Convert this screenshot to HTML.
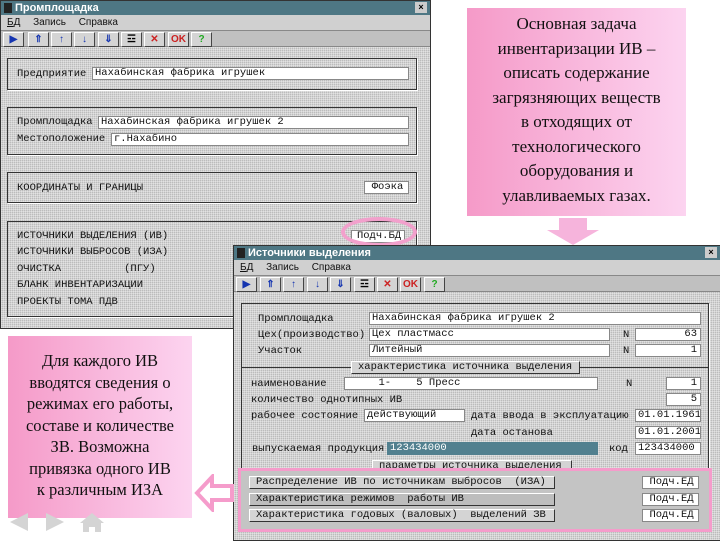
<!DOCTYPE html>
<html><head><meta charset="utf-8"><style>
*{margin:0;padding:0;box-sizing:border-box}
body{width:720px;height:540px;background:#fff;position:relative;overflow:hidden;font-family:"Liberation Mono","DejaVu Sans Mono",monospace;font-size:10.5px;color:#111}
.a{position:absolute}
.win{position:absolute;background:#bcbcbc;border:1px solid #333;
background-image:repeating-linear-gradient(0deg,rgba(255,255,255,.35) 0 1px,transparent 1px 2px),repeating-linear-gradient(90deg,rgba(255,255,255,.35) 0 1px,transparent 1px 2px)}
.title{position:absolute;left:0;right:0;top:0;height:14px;background:#4e7784;color:#fff;font:bold 11px "Liberation Sans",sans-serif;padding-left:14px;line-height:14px}
.title:before{content:"";position:absolute;left:3px;top:2px;width:8px;height:10px;background:#222}
.menu{position:absolute;left:0;right:0;top:14px;height:15px;background:#d0d0d0;font:10px "Liberation Sans",sans-serif;line-height:15px;padding-left:6px;word-spacing:10px}
.tb{position:absolute;left:0;right:0;top:29px;height:17px;background:#c0c0c0;border-top:1px solid #888;border-bottom:1px solid #888}
.btn{position:absolute;top:1px;width:21px;height:15px;background:#d4d4d4;border:1px solid;border-color:#fff #444 #444 #fff;color:#1535b0;font:bold 10px "Liberation Sans",sans-serif;text-align:center;line-height:13px}
.grp{position:absolute;border:1px solid #333;box-shadow:1px 1px 0 #fff}
.in{position:absolute;background:#fff;border:1px solid #888;height:13px;line-height:11px;padding-left:2px;white-space:nowrap;overflow:hidden}
.t{position:absolute;white-space:nowrap;line-height:12px}
.pb{position:absolute;background:#d4d4d4;border:1px solid;border-color:#fff #333 #333 #fff;height:13px;line-height:11px;padding-left:6px;white-space:nowrap}
.pink{position:absolute;background:linear-gradient(90deg,#f59ac8,#fcd4f0);font-family:"Liberation Serif",serif;color:#111;text-align:center}
</style></head><body>

<div class="win" style="left:0;top:0;width:431px;height:329px">
 <div class="title">Промплощадка<span class="a" style="right:3px;top:1px;width:12px;height:11px;background:#ccc;color:#000;font-size:9px;line-height:11px;text-align:center">×</span></div>
 <div class="menu"><u>Б</u>Д Запись Справка</div>
 <div class="tb">
  <div class="btn" style="left:2px">▶</div><div class="btn" style="left:27px">⇑</div><div class="btn" style="left:50px">↑</div><div class="btn" style="left:73px">↓</div><div class="btn" style="left:97px">⇓</div><div class="btn" style="left:120px;color:#000">☲</div><div class="btn" style="left:143px;color:#c22">✕</div><div class="btn" style="left:167px;color:#c22">OK</div><div class="btn" style="left:190px;color:#2a2">?</div>
 </div>
 <div class="grp" style="left:6px;top:57px;width:410px;height:32px"></div>
 <div class="t" style="left:16px;top:67px">Предприятие</div>
 <div class="in" style="left:91px;top:66px;width:317px">Нахабинская фабрика игрушек</div>
 <div class="grp" style="left:6px;top:106px;width:410px;height:48px"></div>
 <div class="t" style="left:16px;top:115px">Промплощадка</div>
 <div class="in" style="left:97px;top:115px;width:311px">Нахабинская фабрика игрушек 2</div>
 <div class="t" style="left:16px;top:132px">Местоположение</div>
 <div class="in" style="left:110px;top:132px;width:298px">г.Нахабино</div>
 <div class="grp" style="left:6px;top:171px;width:410px;height:31px"></div>
 <div class="t" style="left:16px;top:181px">КООРДИНАТЫ И ГРАНИЦЫ</div>
 <div class="in" style="left:363px;top:180px;width:45px;text-align:center">Фоэка</div>
 <div class="grp" style="left:6px;top:220px;width:410px;height:96px"></div>
 <div class="t" style="left:16px;top:229px">ИСТОЧНИКИ ВЫДЕЛЕНИЯ (ИВ)</div>
 <div class="t" style="left:16px;top:245px">ИСТОЧНИКИ ВЫБРОСОВ (ИЗА)</div>
 <div class="t" style="left:16px;top:262px">ОЧИСТКА&nbsp;&nbsp;&nbsp;&nbsp;&nbsp;&nbsp;&nbsp;&nbsp;&nbsp;&nbsp;(ПГУ)</div>
 <div class="t" style="left:16px;top:278px">БЛАНК ИНВЕНТАРИЗАЦИИ</div>
 <div class="t" style="left:16px;top:295px">ПРОЕКТЫ ТОМА ПДВ</div>
 <div class="in" style="left:350px;top:229px;width:54px;text-align:center">Подч.БД</div>
 <div class="a" style="left:340px;top:216px;width:76px;height:30px;border:4px solid #f2a0cc;border-radius:50%"></div>
</div>

<div class="pink" style="left:467px;top:8px;width:219px;height:208px;font-size:17px;line-height:24.5px;padding:4px 22px 0">Основная задача инвентаризации ИВ – описать содержание загрязняющих веществ в отходящих от технологического оборудования и улавливаемых газах.</div>
<svg class="a" style="left:545px;top:216px" width="56" height="30"><path d="M14 2h28v12h12L28 29 2 14h12z" fill="#f6b4dc"/></svg>

<div class="win" style="left:233px;top:245px;width:488px;height:296px">
 <div class="title">Источники выделения<span class="a" style="right:3px;top:1px;width:12px;height:11px;background:#ccc;color:#000;font-size:9px;line-height:11px;text-align:center">×</span></div>
 <div class="menu"><u>Б</u>Д Запись Справка</div>
 <div class="tb">
  <div class="btn" style="left:2px">▶</div><div class="btn" style="left:26px">⇑</div><div class="btn" style="left:49px">↑</div><div class="btn" style="left:73px">↓</div><div class="btn" style="left:96px">⇓</div><div class="btn" style="left:120px;color:#000">☲</div><div class="btn" style="left:143px;color:#c22">✕</div><div class="btn" style="left:166px;color:#c22">OK</div><div class="btn" style="left:190px;color:#2a2">?</div>
 </div>
 <div class="grp" style="left:7px;top:57px;width:468px;height:170px"></div>
 <div class="a" style="left:7px;top:121px;width:468px;height:1px;background:#333"></div>
 <div class="t" style="left:24px;top:67px">Промплощадка</div>
 <div class="in" style="left:135px;top:66px;width:332px">Нахабинская фабрика игрушек 2</div>
 <div class="t" style="left:24px;top:83px">Цех(производство)</div>
 <div class="in" style="left:135px;top:82px;width:241px">Цех пластмасс</div>
 <div class="t" style="left:389px;top:83px">N</div>
 <div class="in" style="left:401px;top:82px;width:66px;text-align:right;padding-right:3px">63</div>
 <div class="t" style="left:24px;top:99px">Участок</div>
 <div class="in" style="left:135px;top:98px;width:241px">Литейный</div>
 <div class="t" style="left:389px;top:99px">N</div>
 <div class="in" style="left:401px;top:98px;width:66px;text-align:right;padding-right:3px">1</div>
 <div class="pb" style="left:117px;top:115px;width:229px">характеристика источника выделения</div>
 <div class="t" style="left:17px;top:132px">наименование</div>
 <div class="in" style="left:110px;top:131px;width:254px">&nbsp;&nbsp;&nbsp;&nbsp;&nbsp;1-&nbsp;&nbsp;&nbsp;&nbsp;5 Пресс</div>
 <div class="t" style="left:392px;top:132px">N</div>
 <div class="in" style="left:432px;top:131px;width:35px;text-align:right;padding-right:3px">1</div>
 <div class="t" style="left:17px;top:148px">количество однотипных ИВ</div>
 <div class="in" style="left:432px;top:147px;width:35px;text-align:right;padding-right:3px">5</div>
 <div class="t" style="left:17px;top:164px">рабочее состояние</div>
 <div class="in" style="left:130px;top:163px;width:101px">действующий</div>
 <div class="t" style="left:237px;top:164px">дата ввода в эксплуатацию</div>
 <div class="in" style="left:401px;top:163px;width:66px">01.01.1961</div>
 <div class="t" style="left:237px;top:181px">дата останова</div>
 <div class="in" style="left:401px;top:180px;width:66px">01.01.2001</div>
 <div class="t" style="left:18px;top:197px">выпускаемая продукция</div>
 <div class="in" style="left:153px;top:196px;width:211px;background:#52808f;color:#fff;border-color:#52808f">123434000</div>
 <div class="t" style="left:375px;top:197px">код</div>
 <div class="in" style="left:401px;top:196px;width:66px">123434000</div>
 <div class="pb" style="left:138px;top:214px;width:200px;height:9px;overflow:hidden">параметры источника выделения</div>
 <div class="a" style="left:4px;top:222px;width:474px;height:64px;border:3px solid #f59ccb;background:#c4c4c4"></div>
 <div class="pb" style="left:15px;top:230px;width:306px">Распределение ИВ по источникам выбросов&nbsp;&nbsp;(ИЗА)</div>
 <div class="pb" style="left:15px;top:247px;width:306px;background:#bdbdbd">Характеристика режимов&nbsp;&nbsp;работы ИВ</div>
 <div class="pb" style="left:15px;top:263px;width:306px">Характеристика годовых (валовых)&nbsp;&nbsp;выделений ЗВ</div>
 <div class="in" style="left:408px;top:230px;width:57px;text-align:center">Подч.ЕД</div>
 <div class="in" style="left:408px;top:247px;width:57px;text-align:center">Подч.ЕД</div>
 <div class="in" style="left:408px;top:263px;width:57px;text-align:center">Подч.ЕД</div>
</div>

<div class="pink" style="left:8px;top:336px;width:184px;height:182px;font-size:16.5px;line-height:21.5px;padding:14px 16px 0">Для каждого ИВ вводятся сведения о режимах его работы, составе и количестве ЗВ. Возможна привязка одного ИВ к различным ИЗА</div>
<svg class="a" style="left:194px;top:474px" width="40" height="38"><path d="M18 3L3 19l15 16v-9h20V12H18z" fill="none" stroke="#f59ccb" stroke-width="4"/></svg>
<svg class="a" style="left:8px;top:510px" width="100" height="24"><path d="M2 12L20 3v18z" fill="#d4d4d4"/><path d="M56 12L38 3v18z" fill="#d4d4d4"/><path d="M84 3l-12 10h3v9h6v-5h6v5h6v-9h3z" fill="#d4d4d4"/></svg>
</body></html>
